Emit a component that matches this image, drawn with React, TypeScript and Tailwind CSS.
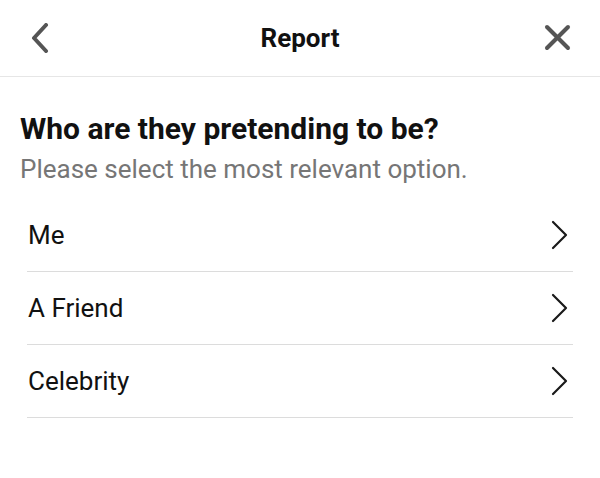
import React from "react";

const rows = ["Me", "A Friend", "Celebrity"];

export default function App() {
  return (
    <div className="w-[600px] h-[478px] bg-white" style={{ fontFamily: "Roboto, 'Liberation Sans', sans-serif" }}>
      <div className="relative h-[77px] border-b border-[#e6e6e6] flex items-center justify-between px-[28px]">
        <svg width="22" height="30" viewBox="0 0 22 30" className="ml-[1px]">
          <polyline points="17,2 5,15 17,28" fill="none" stroke="#555" strokeWidth="4" strokeLinecap="round" strokeLinejoin="round" />
        </svg>
        <div className="absolute left-0 right-0 top-0 bottom-0 flex items-center justify-center pointer-events-none">
          <span className="text-[26px] font-bold text-[#111] leading-[28px]">Report</span>
        </div>
        <svg width="30" height="30" viewBox="0 0 30 30" className="mr-[-1px]">
          <line x1="4" y1="4" x2="25" y2="25" stroke="#555" strokeWidth="4" strokeLinecap="round" />
          <line x1="25" y1="4" x2="4" y2="25" stroke="#555" strokeWidth="4" strokeLinecap="round" />
        </svg>
      </div>
      <div className="pt-[34px] px-[20px]">
        <div className="text-[30px] leading-[36px] font-bold text-[#111]">Who are they pretending to be?</div>
        <div className="mt-[7px] text-[26px] leading-[30px] text-[#767676]">Please select the most relevant option.</div>
      </div>
      <div className="mt-[15px] mx-[27px]">
        {rows.map((r) => (
          <div key={r} className="h-[73px] border-b border-[#dcdcdc] flex items-center justify-between">
            <span className="text-[26px] leading-[30px] text-[#111] pl-[1px]">{r}</span>
            <svg width="20" height="30" viewBox="0 0 20 30" className="mr-[4px]">
              <polyline points="4,2 17,15 4,28" fill="none" stroke="#1a1a1a" strokeWidth="2.2" strokeLinecap="round" strokeLinejoin="round" />
            </svg>
          </div>
        ))}
      </div>
    </div>
  );
}
